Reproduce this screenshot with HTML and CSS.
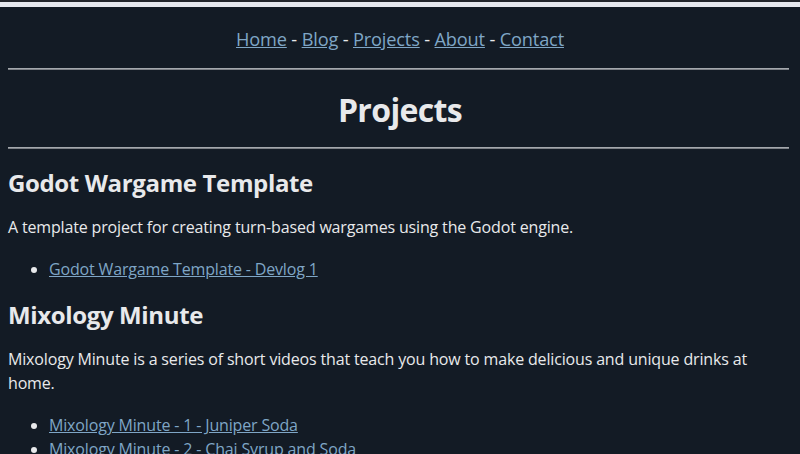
FILE: index.html
```html
<!DOCTYPE html>
<html lang="en">
<head>
    <meta charset="UTF-8">
    <meta name="viewport" content="width=device-width, initial-scale=1.0">
    <title>Projects</title>
    <link rel="stylesheet" href="styles.css">
</head>
<body>

    <div class="topbar"></div>

    <div class="page">
        <nav class="nav">
            <a href="#">Home</a> - <a href="#">Blog</a> - <a href="#">Projects</a> - <a href="#">About</a> - <a href="#">Contact</a>
        </nav>

        <hr>

        <h1>Projects</h1>

        <hr>

        <h2>Godot Wargame Template</h2>
        <p>A template project for creating turn-based wargames using the Godot engine.</p>
        <ul>
            <li><a href="#">Godot Wargame Template - Devlog 1</a></li>
        </ul>

        <h2>Mixology Minute</h2>
        <p>Mixology Minute is a series of short videos that teach you how to make delicious and unique drinks at home.</p>
        <ul>
            <li><a href="#">Mixology Minute - 1 - Juniper Soda</a></li>
            <li><a href="#">Mixology Minute - 2 - Chai Syrup and Soda</a></li>
        </ul>
    </div>

</body>
</html>
```
FILE: styles.css
```css
body {
    margin: 0;
    padding: 0;
    background-color: #131b25;
    color: #e8e9eb;
    font-family: "Open Sans", sans-serif;
    font-size: 16px;
    line-height: 24px;
    letter-spacing: -0.01em;
}

/* Light strip along the top edge */
.topbar {
    height: 5px;
    background-color: #e6e8ee;
    border-top: 2px solid #23262c;
}

.page {
    padding: 0 8px;
}

a {
    color: #7fa6c6;
}

.nav {
    text-align: center;
    font-size: 18.2px;
    line-height: 28px;
    margin-top: 18px;
}

hr {
    border: none;
    border-top: 1px solid #a4a8ad;
    border-bottom: 1px solid #7c8086;
    margin: 15px 3px 0 0;
}

h1 {
    text-align: center;
    font-size: 32px;
    line-height: 40px;
    letter-spacing: -0.02em;
    margin: 20px 0 17px;
}

h2 {
    font-size: 24px;
    line-height: 30px;
    letter-spacing: -0.015em;
    margin: 19px 0 17px;
}

p {
    margin: 0 0 18px;
}

ul {
    margin: 0;
    padding-left: 41px;
}

li {
    line-height: 24px;
}
```
